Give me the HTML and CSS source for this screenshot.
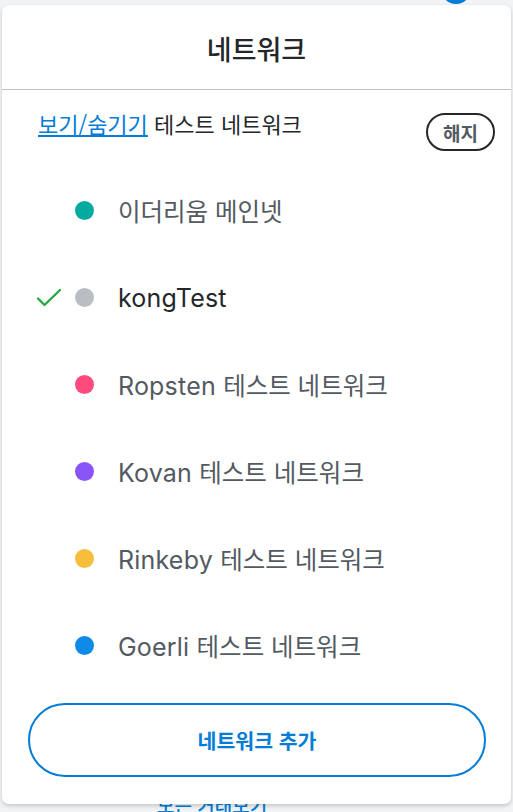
FILE: index.html
```html
<!DOCTYPE html>
<html lang="ko">
<head>
<meta charset="utf-8">
<link rel="stylesheet" href="styles.css">
</head>
<body>
<div class="page">
  <div class="avatar"></div>
  <div class="behind-link">모든 거래보기</div>
</div>
<div class="modal">
  <div class="modal-header">네트워크</div>
  <div class="toggle-row">
    <div class="toggle-text"><a class="link" href="#">보기/숨기기</a> 테스트 네트워크</div>
    <button class="dismiss">해지</button>
  </div>
  <ul class="networks">
    <li class="net"><span class="check"></span><span class="dot teal"></span><span class="name"><span class="ko">이더리움 메인넷</span></span></li>
    <li class="net active"><span class="check"><svg width="26" height="20" viewBox="0 0 26 20"><path d="M2 10.5 L8.5 17 L24 2" fill="none" stroke="#28a745" stroke-width="2.4" stroke-linecap="round" stroke-linejoin="round"/></svg></span><span class="dot grey"></span><span class="name">kongTest</span></li>
    <li class="net"><span class="check"></span><span class="dot pink"></span><span class="name">Ropsten <span class="ko">테스트 네트워크</span></span></li>
    <li class="net"><span class="check"></span><span class="dot purple"></span><span class="name">Kovan <span class="ko">테스트 네트워크</span></span></li>
    <li class="net"><span class="check"></span><span class="dot yellow"></span><span class="name">Rinkeby <span class="ko">테스트 네트워크</span></span></li>
    <li class="net"><span class="check"></span><span class="dot blue"></span><span class="name">Goerli <span class="ko">테스트 네트워크</span></span></li>
  </ul>
  <div class="footer">
    <button class="add">네트워크 추가</button>
  </div>
</div>
</body>
</html>
```
FILE: styles.css
```css
* { box-sizing: border-box; }
html, body { margin: 0; padding: 0; }
body {
  width: 513px;
  height: 812px;
  background: #f2f3f4;
  font-family: "Inter", "Noto Sans CJK KR", sans-serif;
  overflow: hidden;
  position: relative;
}
.page { position: relative; height: 812px; }
.avatar {
  position: absolute;
  left: 441px;
  top: -26px;
  width: 30px;
  height: 30px;
  border-radius: 50%;
  background: #037dd6;
}
.behind-link {
  position: absolute;
  left: 157px;
  top: 791px;
  color: #037dd6;
  font-family: "Noto Sans CJK KR", sans-serif;
  font-size: 19px;
  font-weight: 500;
}
.modal {
  position: absolute;
  left: 2px;
  top: 5px;
  width: 509px;
  height: 799px;
  background: #fff;
  border-radius: 7px;
  box-shadow: 0 2px 4px rgba(0,0,0,0.18);
  display: flex;
  flex-direction: column;
}
.modal-header {
  height: 85px;
  display: flex;
  align-items: center;
  justify-content: center;
  font-family: "Noto Sans CJK KR", sans-serif;
  font-size: 27px;
  font-weight: 500;
  color: #24272a;
  border-bottom: 1.5px solid #bbc0c5;
  padding-top: 2px;
}
.toggle-row {
  display: flex;
  justify-content: space-between;
  align-items: flex-start;
  padding: 17px 16px 0 36px;
}
.toggle-text {
  font-family: "Noto Sans CJK KR", sans-serif;
  font-size: 22px;
  color: #24272a;
}
.link { color: #037dd6; text-decoration: underline; text-underline-offset: 2px; }
.dismiss {
  margin-top: 6px;
  width: 69px;
  height: 38px;
  border: 2px solid #24272a;
  border-radius: 19px;
  background: #fff;
  font-family: "Noto Sans CJK KR", sans-serif;
  font-size: 19px;
  font-weight: 700;
  color: #535a61;
  padding: 0;
}
.networks {
  list-style: none;
  margin: 0;
  padding: 16px 0 0 0;
  flex: 1;
}
.net {
  height: 87px;
  display: flex;
  align-items: center;
  padding-left: 32px;
}
.check {
  width: 38px;
  display: flex;
  align-items: center;
  padding-left: 2px;
}
.dot {
  width: 19px;
  height: 19px;
  border-radius: 50%;
  margin-left: 3px;
  margin-right: 24px;
}
.teal { background: #03aaa0; }
.grey { background: #b9bec4; }
.pink { background: #ff4a7d; }
.purple { background: #8a55f8; }
.yellow { background: #f7bd3c; }
.blue { background: #0f8ae8; }
.name {
  font-size: 25px;
  color: #535a61;
  letter-spacing: 0.2px;
}
.ko {
  font-family: "Noto Sans CJK KR", sans-serif;
  font-size: 24.5px;
  letter-spacing: 0;
}
.active .name { color: #24272a; font-weight: 400; }
.footer {
  padding: 0 24px 27px 26px;
}
.add {
  width: 458px;
  height: 74px;
  border: 2px solid #037dd6;
  border-radius: 37px;
  background: #fff;
  color: #037dd6;
  font-family: "Noto Sans CJK KR", sans-serif;
  font-size: 20.5px;
  font-weight: 700;
}
```
